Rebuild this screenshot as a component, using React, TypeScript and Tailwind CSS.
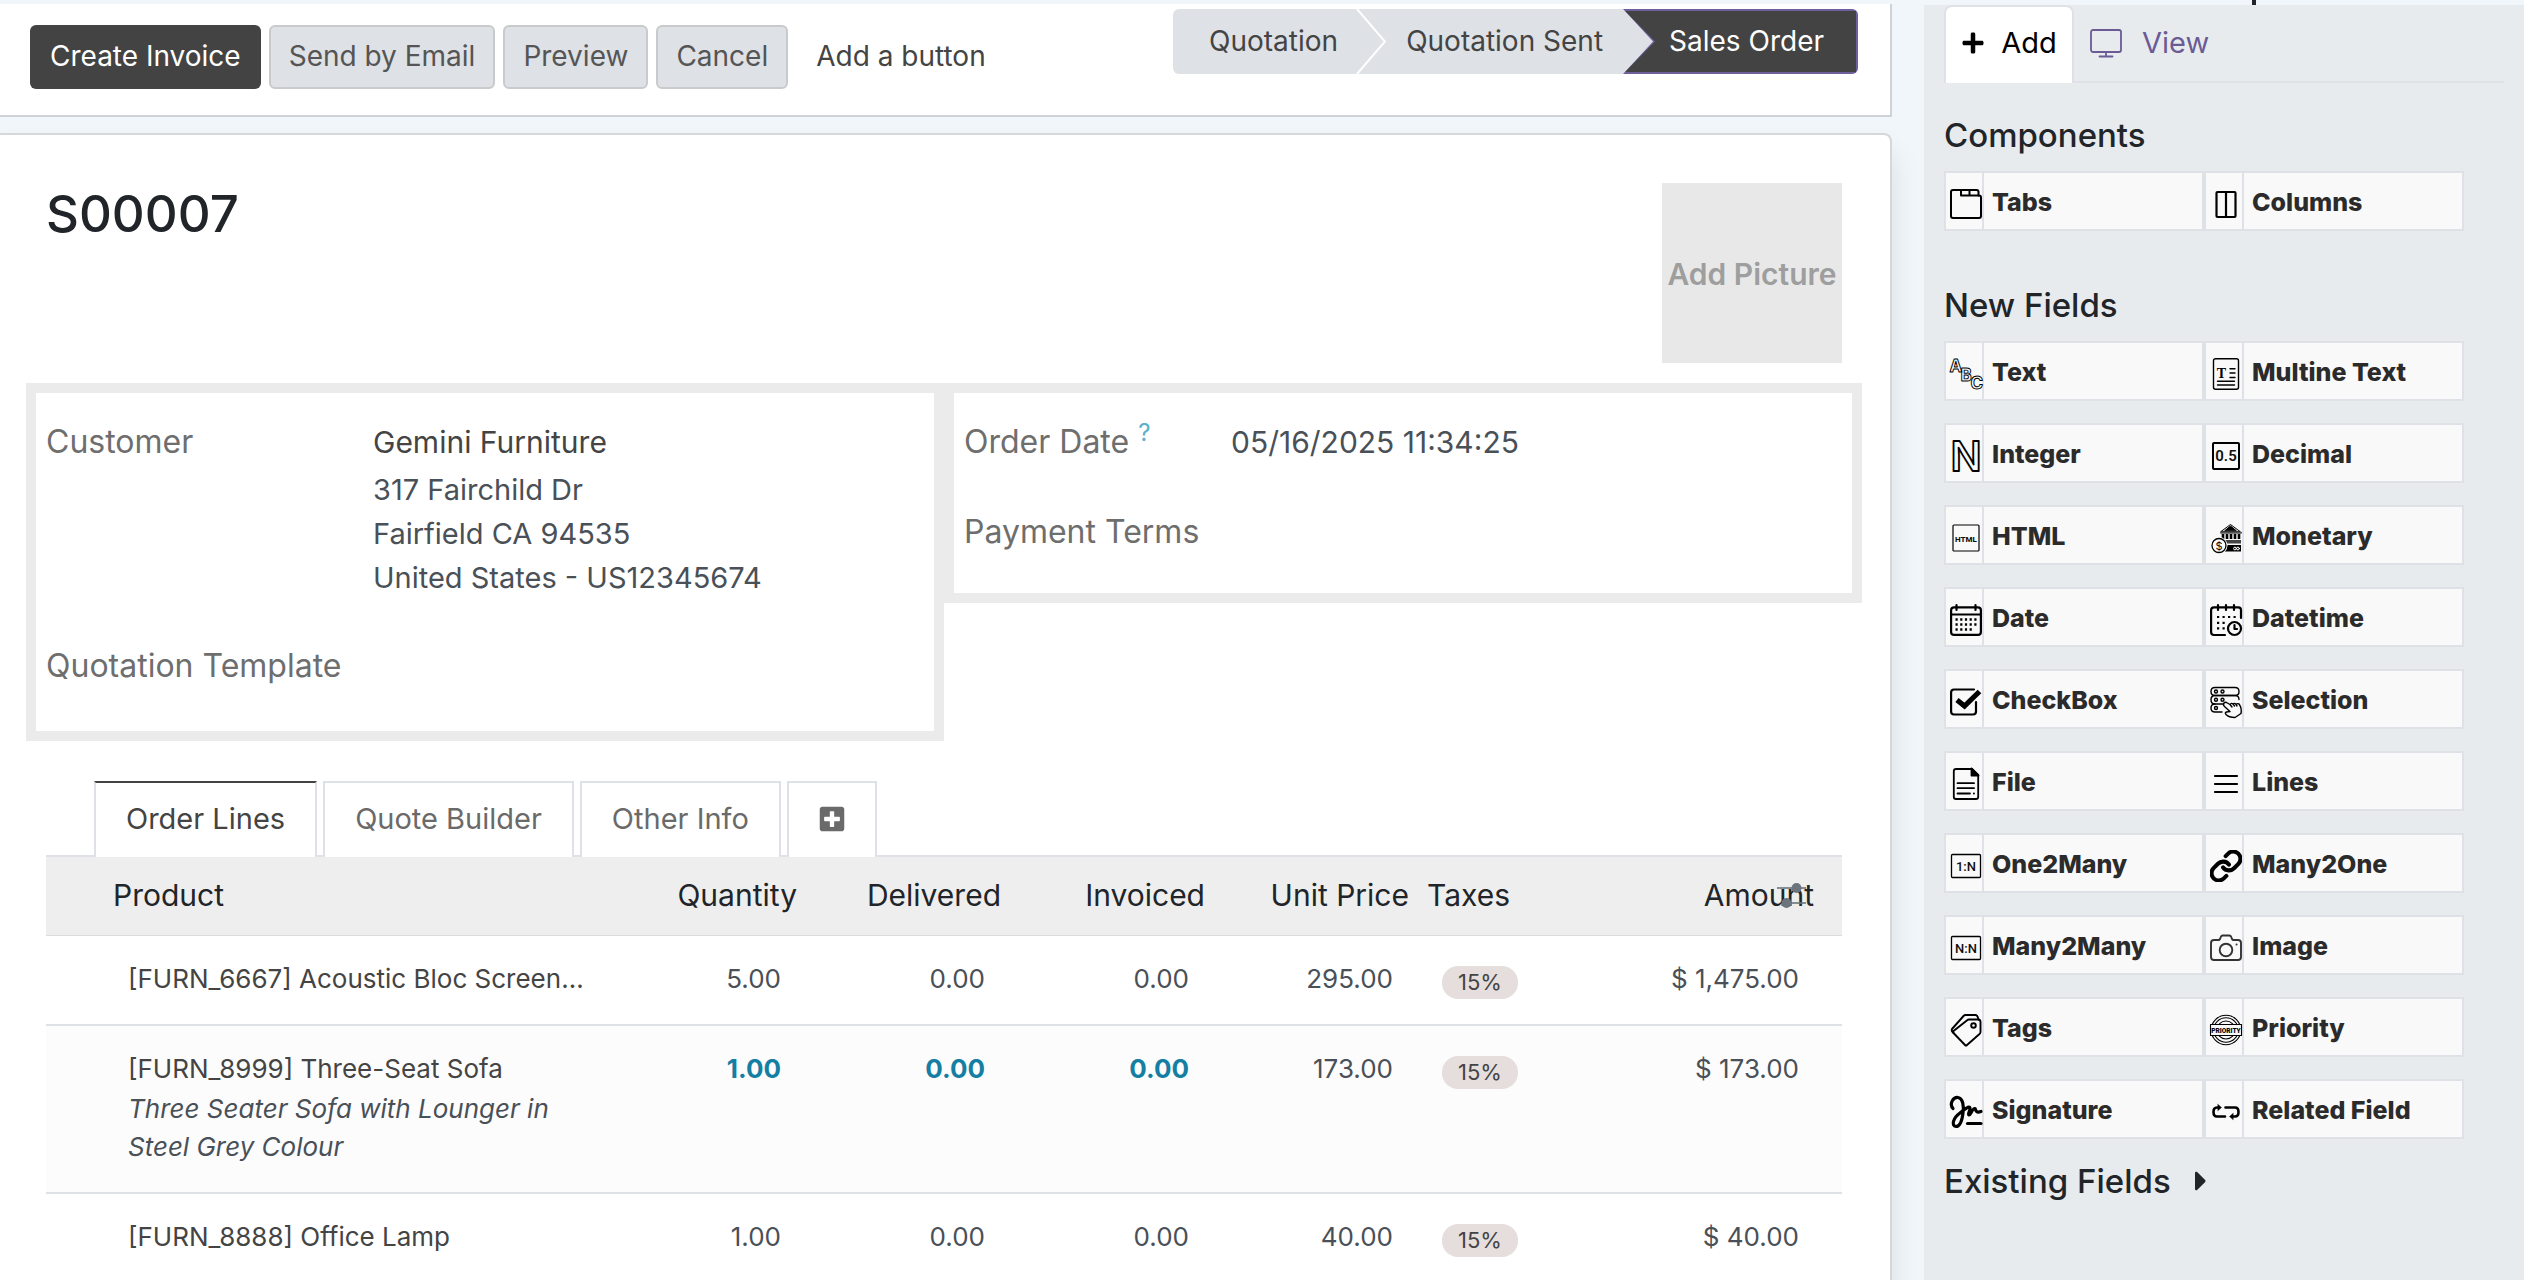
import type { ReactNode } from 'react';
import { Link } from 'lucide-react';
import { FaCaretRight, FaPlus, FaPlusSquare } from 'react-icons/fa';

type Field = { label: string; icon: ReactNode };

type Line = {
  product: string;
  description?: string;
  quantity: string;
  delivered: string;
  invoiced: string;
  price: string;
  tax: string;
  amount: string;
  highlight?: boolean;
};

const lines: Line[] = [
  {
    product: '[FURN_6667] Acoustic Bloc Screen…',
    quantity: '5.00',
    delivered: '0.00',
    invoiced: '0.00',
    price: '295.00',
    tax: '15%',
    amount: '$ 1,475.00',
  },
  {
    product: '[FURN_8999] Three-Seat Sofa',
    description: 'Three Seater Sofa with Lounger in Steel Grey Colour',
    quantity: '1.00',
    delivered: '0.00',
    invoiced: '0.00',
    price: '173.00',
    tax: '15%',
    amount: '$ 173.00',
    highlight: true,
  },
  {
    product: '[FURN_8888] Office Lamp',
    quantity: '1.00',
    delivered: '0.00',
    invoiced: '0.00',
    price: '40.00',
    tax: '15%',
    amount: '$ 40.00',
  },
];

function Svg({ children, width = 2 }: { children: ReactNode; width?: number }) {
  return (
    <svg
      viewBox="0 0 32 32"
      className="h-8 w-8 shrink-0 overflow-visible"
      fill="none"
      stroke="#000"
      strokeWidth={width}
      strokeLinecap="round"
      strokeLinejoin="round"
      aria-hidden="true"
    >
      {children}
    </svg>
  );
}

// Framed label icons: HTML, 0.5, 1:N, N:N
function Framed({ text, size, y, box, width, weight = 600 }: { text: string; size: number; y: number; box: number[]; width: number; weight?: number }) {
  return (
    <Svg width={width}>
      <rect x={box[0]} y={box[1]} width={box[2]} height={box[3]} rx="1" />
      <text x="16" y={y} fontSize={size} fontWeight={weight} fontFamily="Roboto, sans-serif" textAnchor="middle" fill="#111" stroke="none">
        {text}
      </text>
    </Svg>
  );
}

const components: Field[] = [
  {
    label: 'Tabs',
    icon: (
      <Svg>
        <path d="M3 2H26.500Q28.500 2 28.500 4V7.500H29Q31 7.500 31 9.500V28Q31 30 29 30H3Q1 30 1 28V4Q1 2 3 2Z" />
        <path d="M11 2V7.500H28.500M19.500 2V7.500" />
      </Svg>
    ),
  },
  {
    label: 'Columns',
    icon: (
      <Svg width={2.2}>
        <rect x="6.500" y="4" width="19" height="25" rx="1" />
        <path d="M16 4V29" />
      </Svg>
    ),
  },
];

const newFields: Field[] = [
  {
    label: 'Text',
    icon: (
      <Svg width={0.9}>
        <g fontFamily="Inter, sans-serif" fontWeight="700" fontSize="17">
          <text x="-0.500" y="14">A</text>
          <text x="10.500" y="23">B</text>
          <text x="20.500" y="31">C</text>
        </g>
      </Svg>
    ),
  },
  {
    label: 'Multine Text',
    icon: (
      <Svg width={1.4}>
        <rect x="3.500" y="0.700" width="25" height="30.600" rx="2" />
        <text x="11.300" y="20" fontSize="14" fontWeight="700" fontFamily="Liberation Serif, serif" textAnchor="middle" fill="#000" stroke="none">
          T
        </text>
        <path d="M20 10.800H25M20 15H25M20 19.500H25M7.500 23.300H24.500M7.500 27H24.500" />
      </Svg>
    ),
  },
  {
    label: 'Integer',
    icon: (
      <Svg width={1.8}>
        <text x="16" y="31" fontSize="41" fontWeight="600" fontFamily="Inter, sans-serif" textAnchor="middle">
          N
        </text>
      </Svg>
    ),
  },
  { label: 'Decimal', icon: <Framed text="0.5" size={15} y={21} box={[3, 3, 26, 26]} width={2} /> },
  { label: 'HTML', icon: <Framed text="HTML" size={8} y={19.5} box={[3, 3, 26, 26]} width={1.2} weight={800} /> },
  {
    label: 'Monetary',
    icon: (
      <Svg width={1}>
        <path d="M11 9.500L20.500 2.500L30 9.500Z" />
        <path d="M15 8.500L20.500 4L26 8.500Z" fill="#000" />
        <path d="M11 10.800H31" stroke="#555" strokeWidth="2" />
        <path d="M13 12V17M17 12V17M21 12V17M25 12V17M29 12V17" strokeWidth="2.600" strokeLinecap="butt" />
        <path d="M14 18H31V21.500H16Z" fill="#444" stroke="none" />
        <path d="M15 23H31V29.500H15Z" fill="#000" stroke="none" />
        <circle cx="25" cy="26.500" r="1.400" stroke="#fff" />
        <circle cx="28" cy="26.500" r="1.400" stroke="#fff" />
        <circle cx="9" cy="23.500" r="8.500" fill="#f9f9f9" stroke="none" />
        <circle cx="9" cy="23.500" r="7" fill="#fff" strokeWidth="1.300" />
        <text x="9" y="27.500" fontSize="11" fontFamily="Inter, sans-serif" textAnchor="middle" fill="#000" stroke="none">
          $
        </text>
      </Svg>
    ),
  },
  {
    label: 'Date',
    icon: (
      <Svg width={2.2}>
        <rect x="1.100" y="3.300" width="29.800" height="27.600" rx="3" />
        <path d="M6.500 1V6M25.500 1V6M1 10.500H31" />
        <path
          d="M5.500 15.500H7.700M10.200 15.500H12.400M14.900 15.500H17.100M19.600 15.500H21.800M24.300 15.500H26.500M5.500 20.500H7.700M10.200 20.500H12.400M14.900 20.500H17.100M19.600 20.500H21.800M24.300 20.500H26.500M5.500 25.500H7.700M10.200 25.500H12.400M14.900 25.500H17.100M19.600 25.500H21.800"
          strokeLinecap="butt"
          strokeWidth="2.300"
        />
      </Svg>
    ),
  },
  {
    label: 'Datetime',
    icon: (
      <Svg width={2.2}>
        <path d="M31 14V6Q31 3.300 28.500 3.300H4Q1.100 3.300 1.100 6V28Q1.100 31 4 31H15" />
        <path d="M8 1V6M16 1V6M24 1V6" />
        <path
          d="M7 13H9.200M12.500 13H14.700M18 13H20.200M23.500 13H25.700M7 18.800H9.200M12.500 18.800H14.700M7 24.300H9.200M12.500 24.300H14.700"
          strokeLinecap="butt"
        />
        <circle cx="24.500" cy="24.500" r="6.500" />
        <path d="M24.500 21V25H27" />
      </Svg>
    ),
  },
  {
    label: 'CheckBox',
    icon: (
      <Svg width={2.2}>
        <path d="M24 3.500H4Q1.100 3.500 1.100 6.500V25.500Q1.100 28.500 4 28.500H23Q26 28.500 26 25.500V16" />
        <path d="M7 14L14.500 20L29.500 5.500" strokeWidth="5.200" strokeLinecap="butt" strokeLinejoin="miter" />
      </Svg>
    ),
  },
  {
    label: 'Selection',
    icon: (
      <Svg width={1.4}>
        <path d="M5 1.500H25Q29 1.500 29 5.500Q29 9.500 25 9.500H5Q1 9.500 1 5.500Q1 1.500 5 1.500Z" />
        <path d="M16 18H5Q1 18 1 13.700Q1 9.500 5 9.500H25Q29 9.500 29 13.500" />
        <path d="M5 18Q1 18 1 22Q1 26 5 26H12" />
        <circle cx="6" cy="5.500" r="1.500" />
        <circle cx="12.500" cy="5.500" r="1.500" />
        <circle cx="6" cy="13.700" r="1.500" />
        <circle cx="12.500" cy="13.700" r="1.500" />
        <circle cx="6" cy="22" r="1.500" />
        <path
          d="M14 17Q12.500 19 15 21L20 25.500L16.500 26Q14.500 26.500 16 28.500Q19 31.500 25 31.500L31 27.500Q32 22 29 18Q27 17 26 18.500Q25 16.500 23 18Q21.500 16.500 20 18.500L16.500 16.500Q15 15.800 14 17ZM20 18.500L22 21M23 18L24.500 20M26 18.500L27 20"
          fill="#f9f9f9"
        />
      </Svg>
    ),
  },
  {
    label: 'File',
    icon: (
      <Svg width={1.8}>
        <path d="M22 1H6Q3.800 1 3.800 3V29Q3.800 31 6 31H26Q28.200 31 28.200 29V7Z" />
        <path d="M21.500 0.500V7.500H28.500Z" fill="#000" />
        <path d="M7.500 15.200H24M7.500 20.200H24M7.500 25.500H20M23.800 25.500H24" />
      </Svg>
    ),
  },
  {
    label: 'Lines',
    icon: (
      <Svg width={2.2}>
        <path d="M5 8H27M5 16H27M5 24H27" />
      </Svg>
    ),
  },
  { label: 'One2Many', icon: <Framed text="1:N" size={13} y={20.5} box={[1.5, 4.5, 29, 23]} width={1.3} weight={500} /> },
  {
    label: 'Many2One',
    icon: <Link viewBox="1 1 22 22" className="h-8 w-8 shrink-0" strokeWidth={2.8} color="#000" aria-hidden="true" />,
  },
  { label: 'Many2Many', icon: <Framed text="N:N" size={13} y={20.5} box={[1.5, 4.5, 29, 23]} width={1.3} weight={500} /> },
  {
    label: 'Image',
    icon: (
      <Svg width={1.9}>
        <g stroke="#333">
          <path d="M4 8H8.500Q9.500 8 10 7L11 4.500Q11.500 3.500 12.500 3.500H19.500Q20.500 3.500 21 4.500L22 7Q22.500 8 23.500 8H28Q31 8 31 11V25Q31 28 28 28H4Q1 28 1 25V11Q1 8 4 8Z" />
          <circle cx="16" cy="18" r="6.300" />
          <path d="M26.500 12.500H26.600" />
        </g>
      </Svg>
    ),
  },
  {
    label: 'Tags',
    icon: (
      <Svg width={1.9}>
        <path d="M19 5.500H28Q30.500 5.500 30.500 8V18Q30.500 19 29.500 20L17 31Q16 32 15 31L3.500 19Q2.500 18 3.500 17L17.500 6Q18 5.500 19 5.500Z" />
        <path d="M3.500 19Q1 17 2 15L13.500 2Q14.500 1 15.500 1H25.500Q27.500 1 28.500 5.500" />
        <circle cx="23.500" cy="11.500" r="2.300" />
      </Svg>
    ),
  },
  {
    label: 'Priority',
    icon: (
      <Svg width={1.1}>
        <circle cx="16" cy="16" r="14.800" />
        <circle cx="16" cy="16" r="12.300" />
        <circle cx="16" cy="16" r="9" />
        <rect x="0.500" y="10.500" width="31" height="11" fill="#f9f9f9" />
        <text x="16" y="18.500" fontSize="6.500" fontWeight="900" fontFamily="Roboto, sans-serif" textAnchor="middle" fill="#000" stroke="none">
          PRIORITY
        </text>
      </Svg>
    ),
  },
  {
    label: 'Signature',
    icon: (
      <Svg width={3.2}>
        <path d="M3 12.500C-1 8 3 1 8 1.500C13 2.500 14 10 13 17C12 25 9.500 30.500 6 30.500C1 30 3 22 10 17C14.500 13 19.500 9.500 20 12C20.300 14.500 17.500 18.500 19 19C21 19 22 12 25 12.500C26 13.500 25 17.500 31 15.500" />
        <path d="M17.500 27.500H31" />
      </Svg>
    ),
  },
  {
    label: 'Related Field',
    icon: (
      <Svg width={2.6}>
        <path d="M9 11.500H7Q3.500 11.500 3.500 16Q3.500 20.500 7 20.500H15" />
        <path d="M15.500 11.500H25Q28.500 11.500 28.500 16Q28.500 20.500 25 20.500H23" />
        <path d="M8 8.500L11.500 11.500L8 14.500ZM23 17.500L19.500 20.500L23 23.500Z" fill="#000" strokeWidth="0.500" />
      </Svg>
    ),
  },
];

function FieldCard({ label, icon }: Field) {
  return (
    <button type="button" className="flex h-15 border-2 border-[#dee2e6] bg-[#f9f9f9] text-left">
      <span className="flex h-full w-[38px] items-end border-r-2 border-[#dee2e6] pb-[9px] pl-1">{icon}</span>
      <span className="self-center pt-1 pl-2 text-[25px] font-extrabold whitespace-nowrap text-[#2b2b2b]">{label}</span>
    </button>
  );
}

function Sidebar() {
  return (
    <aside className="mt-[5px] w-[600px] shrink-0 bg-[#e8ebee] pr-5 pl-5 text-[#212529]">
      <div className="flex h-[78px] border-b-2 border-[#dee2e6]">
        <button type="button" className="-mb-[2px] flex w-[130px] items-center justify-center gap-4 rounded-t-lg border-2 border-b-0 border-[#dee2e6] bg-white pb-1 text-[29px] text-black">
          <FaPlus className="h-6 w-6" aria-hidden="true" />
          Add
        </button>
        <button type="button" className="flex items-center gap-5 pl-4 text-[29px] text-[#6b5b95]">
          <svg viewBox="0 0 32 32" className="h-8 w-8" fill="none" stroke="currentColor" strokeWidth="1.800" strokeLinecap="round" aria-hidden="true">
            <rect x="1" y="3" width="30" height="22" rx="2" />
            <path d="M16 25V29M9.500 29.500H22.500" />
          </svg>
          View
        </button>
      </div>

      <h2 className="mt-7 text-[33px] leading-12 font-medium">Components</h2>
      <div className="mt-3 grid w-[520px] grid-cols-2">
        {components.map((field) => (
          <FieldCard key={field.label} {...field} />
        ))}
      </div>

      <h2 className="mt-[50px] text-[33px] leading-12 font-medium">New Fields</h2>
      <div className="mt-3 grid w-[520px] grid-cols-2 gap-y-[22px]">
        {newFields.map((field) => (
          <FieldCard key={field.label} {...field} />
        ))}
      </div>

      <button type="button" className="mt-[18px] flex items-center gap-6 text-[33px] leading-12 font-medium">
        Existing Fields
        <FaCaretRight className="h-8 w-3" aria-hidden="true" />
      </button>
    </aside>
  );
}

function StatusBar() {
  return (
    <div className="flex h-[65px] overflow-hidden rounded-md bg-[#dee1e6] text-[28px] text-[#444]">
      <button type="button" className="pr-[18px] pb-[2px] pl-9">Quotation</button>
      <svg viewBox="0 0 30 65" className="h-full w-[30px]" fill="none" stroke="#fff" strokeWidth="2" aria-hidden="true">
        <path d="M1 0L29 32.500L1 65" />
      </svg>
      <button type="button" className="px-5 pb-[2px]">Quotation Sent</button>
      <button
        type="button"
        aria-current="step"
        className="bg-[#6f5f9c] p-[2px] pl-0 text-white [clip-path:polygon(0_0,100%_0,100%_100%,0_100%,30px_50%)]"
      >
        <span className="flex h-full items-center bg-[#434343] pr-[32px] pb-[2px] pl-[46px] [clip-path:polygon(2px_0,100%_0,100%_100%,2px_100%,32px_50%)]">
          Sales Order
        </span>
      </button>
    </div>
  );
}

function Toolbar() {
  const secondary = 'h-16 rounded-md border-2 border-[#c9cacc] bg-[#dee1e6] px-[18px] pb-[2px]';
  return (
    <header className="mt-1 flex items-start justify-between border-r-2 border-b-2 border-[#cfd3d8] bg-white pt-[5px] pr-8 pb-[26px] pl-[30px]">
      <div className="mt-4 flex items-center gap-2 text-[28px] text-[#555]">
        <button type="button" className="h-16 rounded-md bg-[#434343] px-5 pb-[2px] text-white">Create Invoice</button>
        <button type="button" className={secondary}>Send by Email</button>
        <button type="button" className={secondary}>Preview</button>
        <button type="button" className={secondary}>Cancel</button>
        <button type="button" className="h-16 px-5 pb-[2px] text-[#444]">Add a button</button>
      </div>
      <StatusBar />
    </header>
  );
}

function OrderLines() {
  return (
    <table className="w-full table-fixed text-[26px] leading-[38px] text-[#495057]">
      <colgroup>
        <col />
        <col className="w-[204px]" />
        <col className="w-[204px]" />
        <col className="w-[204px]" />
        <col className="w-[204px]" />
        <col className="w-[204px]" />
        <col className="w-[221px]" />
      </colgroup>
      <thead>
        <tr className="h-[78px] border-b border-[#dadcde] bg-[#eee] text-[30px] text-[#212529] [&>th]:pb-[2px] [&>th]:font-normal">
          <th className="pl-[67px] text-left">Product</th>
          <th className="pr-2 text-right">Quantity</th>
          <th className="pr-2 text-right">Delivered</th>
          <th className="pr-2 text-right">Invoiced</th>
          <th className="pr-2 text-right">Unit Price</th>
          <th className="pl-[10px] text-left">Taxes</th>
          <th className="relative pr-7 text-right">
            Amount
            <svg viewBox="0 0 30 26" className="absolute top-[26px] right-[35px] h-[26px] w-[30px]" fill="#6c757d" stroke="#6c757d" strokeWidth="2" aria-hidden="true">
              <path d="M0 5H29M6 20H29" opacity="0.800" />
              <circle cx="19.500" cy="5" r="4" />
              <circle cx="9.500" cy="20" r="4" />
            </svg>
          </th>
        </tr>
      </thead>
      <tbody>
        {lines.map((line) => (
          <tr key={line.product} className="border-b-2 border-[#dee2e6] align-top even:bg-[#fcfcfc] [&>td]:pt-[24px] [&>td]:pb-[26px]">
            <td className="pl-[82px] text-[#444]">
              <div className="whitespace-nowrap">{line.product}</div>
              {line.description && <div className="mt-[2px] max-w-[440px] text-[#495057] italic">{line.description}</div>}
            </td>
            {[line.quantity, line.delivered, line.invoiced].map((value, i) => (
              <td key={i} className={line.highlight ? 'pr-6 text-right font-bold text-[#147fa3]' : 'pr-6 text-right'}>
                {value}
              </td>
            ))}
            <td className="pr-6 text-right">{line.price}</td>
            <td className="pl-[25px]">
              <span className="mt-[6px] -mb-[1px] block h-[33px] w-19 rounded-2xl bg-[#e6dedd] text-center text-[22px] leading-[33px] text-[#444]">
                {line.tax}
              </span>
            </td>
            <td className="pr-[43px] text-right">{line.amount}</td>
          </tr>
        ))}
      </tbody>
    </table>
  );
}

function Sheet() {
  const tab = '-mb-[2px] h-19 border-2 border-b-0 border-[#dee2e6] bg-white px-[30px] pb-[2px]';
  return (
    <main className="mt-4 flex-1 rounded-tr-lg border-t-2 border-r-2 border-[#d5d7da] bg-white pt-12 pr-12 pl-[46px] shadow-[0_20px_30px_rgba(0,0,0,0.1)]">
      <div className="flex items-start justify-between">
        <h1 className="text-[51px] leading-[62px] font-medium text-[#212529]">S00007</h1>
        <button type="button" className="h-45 w-45 bg-[#e8e8e8] pt-[2px] text-[30px] font-semibold whitespace-nowrap text-[#9e9e9e]">
          Add Picture
        </button>
      </div>

      <div className="-mx-5 mt-5 flex items-start text-[30px] leading-11 text-[#495057]">
        <section className="grid flex-1 grid-cols-[327px_1fr] border-10 border-[#ebebeb] pt-[27px] pb-[43px] pl-[10px]">
          <span className="text-[32px] text-[#6e6e6e]">Customer</span>
          <div>
            <a href="#customer" className="block text-[#444]">Gemini Furniture</a>
            <address className="mt-1 text-[29px] not-italic">
              317 Fairchild Dr
              <br />
              Fairfield CA 94535
              <br />
              United States - US12345674
            </address>
          </div>
          <span className="mt-11 text-[32px] whitespace-nowrap text-[#6e6e6e]">Quotation Template</span>
        </section>
        <section className="grid flex-1 grid-cols-[267px_1fr] gap-y-[46px] border-10 border-[#ebebeb] pt-[27px] pb-[39px] pl-[10px]">
          <span className="text-[32px] text-[#6e6e6e]">
            Order Date <sup className="-top-3 text-[24px] leading-none text-[#5bb0cb]">?</sup>
          </span>
          <span>05/16/2025 11:34:25</span>
          <span className="text-[32px] text-[#6e6e6e]">Payment Terms</span>
        </section>
      </div>

      <div className="mt-10 flex gap-[6px] border-b-2 border-[#dee2e6] pl-12 text-[29px] text-[#6a6a6a]" role="tablist">
        <button
          type="button"
          role="tab"
          aria-selected="true"
          className="-mb-[2px] h-19 border-2 border-b-0 border-[#dee2e6] border-t-[#434343] bg-white px-[30px] pb-[2px] text-[#444]"
        >
          Order Lines
        </button>
        <button type="button" role="tab" className={tab}>Quote Builder</button>
        <button type="button" role="tab" className={tab}>Other Info</button>
        <button type="button" className={tab} aria-label="Add a tab">
          <FaPlusSquare className="h-7 w-[26px]" aria-hidden="true" />
        </button>
      </div>
      <OrderLines />
    </main>
  );
}

export default function App() {
  return (
    <div className="relative flex h-screen gap-8 overflow-hidden bg-[#f1f6fb] font-[Inter,sans-serif]">
      <div className="flex min-w-0 flex-1 flex-col">
        <Toolbar />
        <Sheet />
      </div>
      <Sidebar />
      {/* tail of the clipped navbar label */}
      <div className="absolute top-0 right-[268px] h-[5px] w-1 bg-[#212529]" />
    </div>
  );
}
